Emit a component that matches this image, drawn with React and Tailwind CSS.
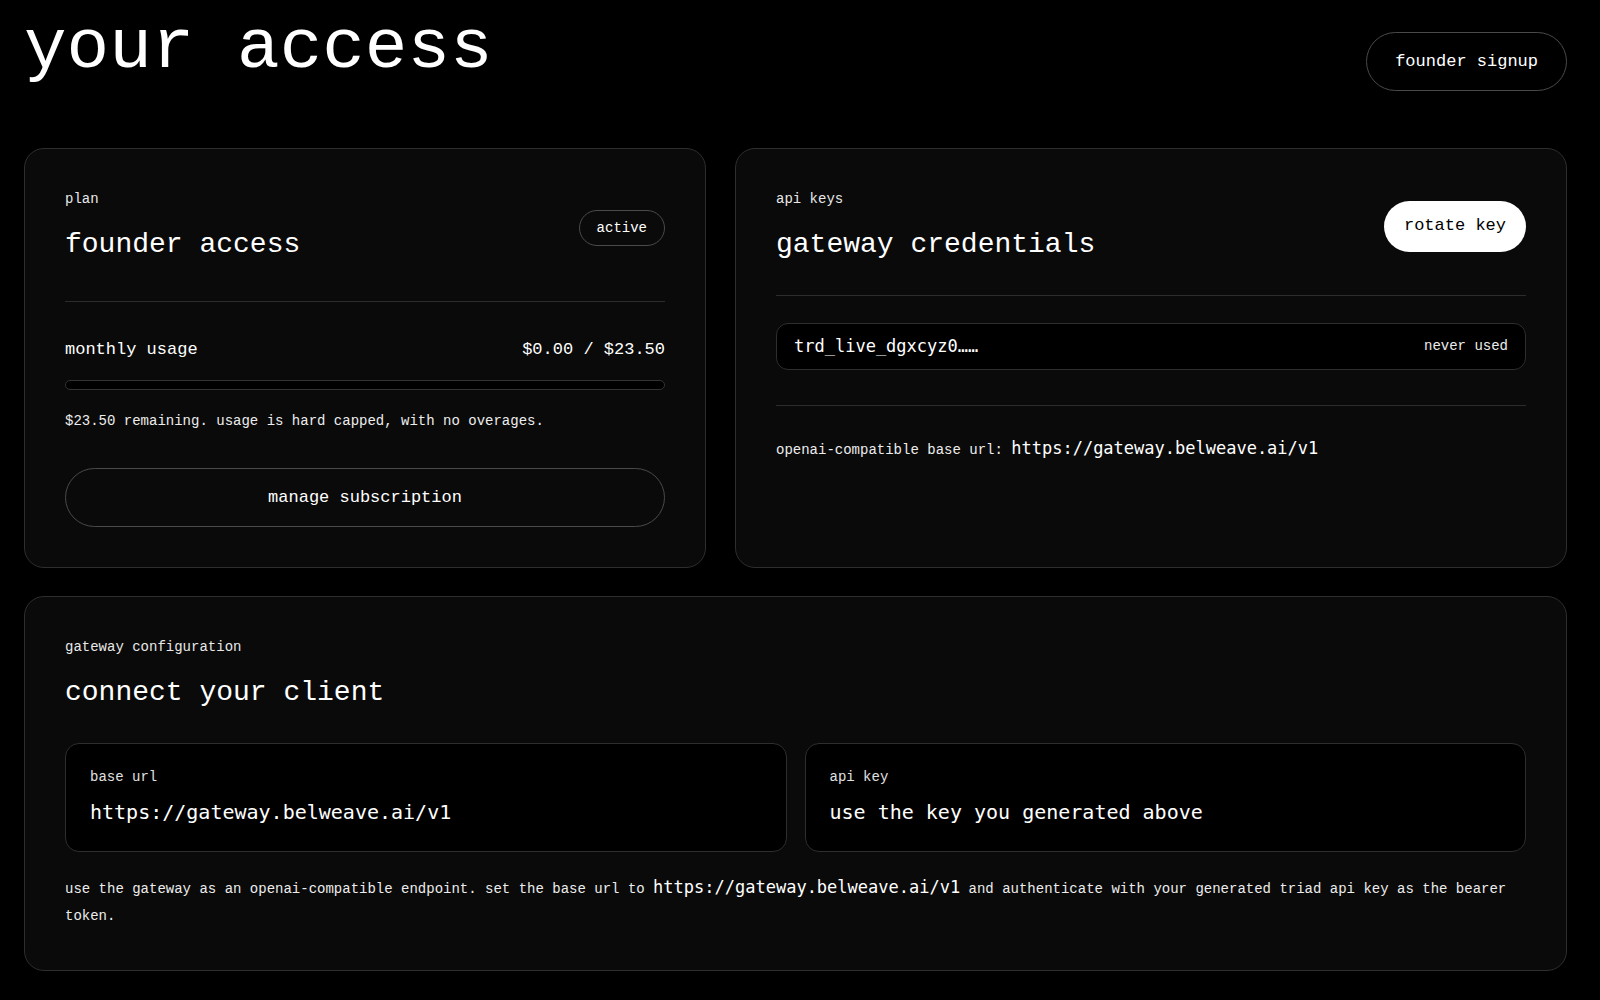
import React from "react";

const mono = "font-['Liberation_Mono','DejaVu_Sans_Mono',monospace]";
const code = "font-['DejaVu_Sans_Mono','Liberation_Mono',monospace]";
const BASE_URL = "https://gateway.belweave.ai/v1";

const Card = ({ children, className = "" }) => (
  <div className={`rounded-[20px] border border-[#2e2e2e] bg-[#0a0a0a] p-10 ${className}`}>
    {children}
  </div>
);

const CardTitle = ({ label, title }) => (
  <div>
    <p className="text-[14px] leading-5 text-[#e8e8e8]">{label}</p>
    <h2 className="mt-[18px] text-[28px] leading-9 text-white">{title}</h2>
  </div>
);

const Divider = ({ className = "" }) => <div className={`h-px bg-[#2c2c2c] ${className}`} />;

const PlanCard = () => (
  <Card>
    <div className="flex items-center justify-between">
      <CardTitle label="plan" title="founder access" />
      <span className="mt-1 flex h-9 items-center rounded-full border border-[#4a4a4a] px-[17px] text-[14px]">
        active
      </span>
    </div>
    <Divider className="mt-[38px]" />
    <div className="mt-9 flex items-center justify-between text-[17px] leading-6">
      <span>monthly usage</span>
      <span>$0.00 / $23.50</span>
    </div>
    <div className="mt-[18px] h-[10px] w-full rounded-full border border-[#333] bg-black" />
    <p className="mt-[21px] text-[14px] leading-5 text-[#ededed]">
      $23.50 remaining. usage is hard capped, with no overages.
    </p>
    <button className="mt-[37px] h-[59px] w-full rounded-full border border-[#4a4a4a] text-[17px] text-white">
      manage subscription
    </button>
  </Card>
);

const KeysCard = () => (
  <Card>
    <div className="flex items-center justify-between">
      <CardTitle label="api keys" title="gateway credentials" />
      <button className="h-[51px] rounded-full bg-white px-5 text-[17px] text-black">rotate key</button>
    </div>
    <Divider className="mt-8" />
    <div className="mt-[27px] flex h-[47px] items-center justify-between rounded-xl border border-[#2e2e2e] bg-black px-[17px]">
      <span className={`${code} text-[17px]`}>trd_live_dgxcyz0……</span>
      <span className="text-[14px] text-[#ededed]">never used</span>
    </div>
    <Divider className="mt-[35px]" />
    <p className="mt-[30px] text-[14px] leading-6 text-[#ededed]">
      openai-compatible base url: <span className={`${code} text-[17px] text-white`}>{BASE_URL}</span>
    </p>
  </Card>
);

const ConfigBox = ({ label, value }) => (
  <div className="rounded-[14px] border border-[#2e2e2e] bg-black px-6 pb-[25px] pt-[23px]">
    <p className="text-[14px] leading-5 text-[#e0e0e0]">{label}</p>
    <p className={`${code} mt-[11px] text-[20px] leading-7`}>{value}</p>
  </div>
);

export default function App() {
  return (
    <div className={`min-h-screen bg-black pb-8 pl-6 pr-[33px] pt-[13px] text-white ${mono}`}>
      <header className="flex items-start justify-between">
        <h1 className="text-[71px] leading-none">your access</h1>
        <button className="mt-[19px] h-[59px] rounded-full border border-[#4a4a4a] px-7 text-[17px]">
          founder signup
        </button>
      </header>

      <div className="mt-[57px] grid grid-cols-[682fr_832fr] gap-[29px]">
        <PlanCard />
        <KeysCard />
      </div>

      <Card className="mt-7">
        <CardTitle label="gateway configuration" title="connect your client" />
        <div className="mt-8 grid grid-cols-2 gap-[18px]">
          <ConfigBox label="base url" value={BASE_URL} />
          <ConfigBox label="api key" value="use the key you generated above" />
        </div>
        <p className="mt-6 text-[14px] leading-[27px] text-[#ededed]">
          use the gateway as an openai-compatible endpoint. set the base url to{" "}
          <span className={`${code} text-[17px] leading-none text-white`}>{BASE_URL}</span> and authenticate
          with your generated triad api key as the bearer token.
        </p>
      </Card>
    </div>
  );
}
